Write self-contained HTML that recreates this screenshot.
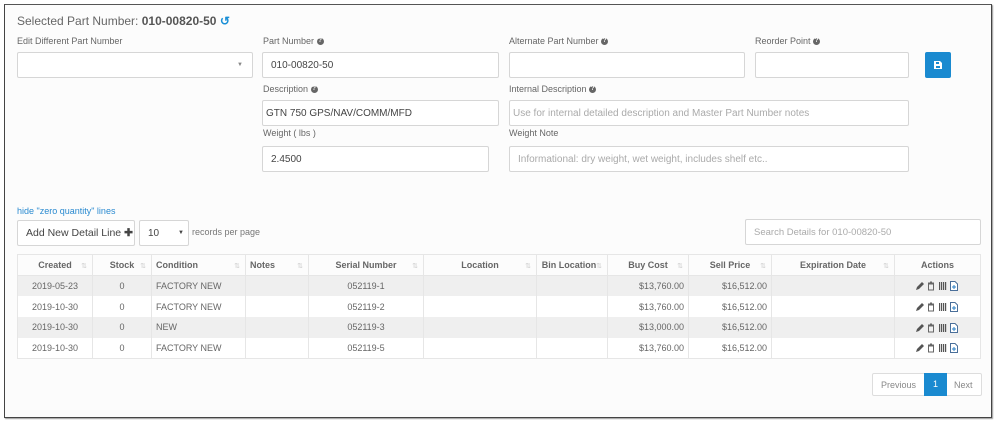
<!DOCTYPE html>
<html><head><meta charset="utf-8"><style>
*{box-sizing:border-box;margin:0;padding:0}
body{width:1000px;height:427px;background:#fff;font-family:"Liberation Sans",sans-serif;color:#555;position:relative;overflow:hidden}
.frame{position:absolute;left:4px;top:4px;width:988px;height:414px;border:1px solid #444;border-top-color:#555;background:#fcfcfc;box-shadow:1px 1px 1px #999}
.a{position:absolute}
.lbl{font-size:9px;color:#666}
.inp{position:absolute;border:1px solid #d6d6d6;background:#fff;border-radius:2px;font-size:10px;color:#444;padding-left:8px;display:flex;align-items:center}
.ph{color:#aaa}
.q{display:inline-block;width:7px;height:7px;border-radius:50%;background:#666;color:#fff;font-size:6px;text-align:center;line-height:7px;font-weight:bold;vertical-align:middle}
table{position:absolute;left:17px;top:254px;width:964px;border-collapse:collapse;font-size:9px;color:#666}
th{height:21px;font-weight:bold;border:1px solid #e6e6e6;color:#666;position:relative;background:#fcfcfc}
th span.s{position:absolute;right:5px;top:7px;color:#ccc;font-size:7px;font-weight:normal}
td{height:20.7px;border-left:1px solid #e6e6e6;border-right:1px solid #e6e6e6;padding:0 4px}
tr.g td{background:#efefef}
tr.w td{background:#fff}
tbody tr:last-child td{border-bottom:1px solid #e6e6e6}
.c{text-align:center}.r{text-align:right}
svg.ic{vertical-align:middle}
</style></head><body>
<div class="frame"></div>
<div class="a" style="left:17px;top:14px;font-size:12px;color:#666">Selected Part Number: <b style="color:#555">010-00820-50</b> <span style="color:#1a8fd6;font-weight:bold">↺</span></div>
<div class="a lbl" style="left:17px;top:36px">Edit Different Part Number</div>
<div class="inp" style="left:17px;top:52px;width:236px;height:26px"><span style="position:absolute;right:9px;font-size:6px;color:#888">▼</span></div>
<div class="a lbl" style="left:263px;top:36px">Part Number <span class="q">?</span></div>
<div class="inp" style="left:262px;top:52px;width:237px;height:26px">010-00820-50</div>
<div class="a lbl" style="left:509px;top:36px">Alternate Part Number <span class="q">?</span></div>
<div class="inp" style="left:509px;top:52px;width:236px;height:26px"></div>
<div class="a lbl" style="left:755px;top:36px">Reorder Point <span class="q">?</span></div>
<div class="inp" style="left:755px;top:52px;width:154px;height:26px"></div>
<div class="a" style="left:925px;top:52px;width:26px;height:26px;background:#1a8ad0;border-radius:2px"><svg class="a" style="left:9px;top:9px" width="8" height="8" viewBox="0 0 8 8"><path d="M0 0H6L8 2V8H0Z" fill="#fff"/><rect x="2" y="1" width="3" height="2" fill="#1a8ad0"/><rect x="2" y="5" width="4" height="2" fill="#1a8ad0"/></svg></div>
<div class="a lbl" style="left:263px;top:84px">Description <span class="q">?</span></div>
<div class="inp" style="left:262px;top:100px;width:237px;height:26px;padding-left:3px">GTN 750 GPS/NAV/COMM/MFD</div>
<div class="a lbl" style="left:509px;top:84px">Internal Description <span class="q">?</span></div>
<div class="inp ph" style="left:509px;top:100px;width:400px;height:26px;padding-left:3px">Use for internal detailed description and Master Part Number notes</div>
<div class="a lbl" style="left:263px;top:128px">Weight ( lbs )</div>
<div class="inp" style="left:262px;top:146px;width:227px;height:26px">2.4500</div>
<div class="a lbl" style="left:509px;top:128px">Weight Note</div>
<div class="inp ph" style="left:509px;top:146px;width:400px;height:26px">Informational: dry weight, wet weight, includes shelf etc..</div>
<div class="a" style="left:17px;top:206px;font-size:9px;color:#2a8ad0">hide "zero quantity" lines</div>
<div class="inp" style="left:17px;top:220px;width:118px;height:26px;font-size:10.5px;color:#444">Add New Detail Line <b style="margin-left:3px">✚</b></div>
<div class="inp" style="left:139px;top:220px;width:50px;height:26px;font-size:10px">10<span style="position:absolute;right:4px;font-size:6px">▼</span></div>
<div class="a" style="left:192px;top:227px;font-size:9px;color:#777">records per page</div>
<div class="inp ph" style="left:745px;top:219px;width:236px;height:26px;font-size:9.5px">Search Details for 010-00820-50</div>
<table>
<thead><tr>
<th style="width:75px">Created<span class="s">⇅</span></th>
<th style="width:59px">Stock<span class="s">⇅</span></th>
<th style="width:94px;text-align:left;padding-left:4px">Condition<span class="s">⇅</span></th>
<th style="width:63px;text-align:left;padding-left:4px">Notes<span class="s">⇅</span></th>
<th style="width:115px">Serial Number<span class="s">⇅</span></th>
<th style="width:113px">Location<span class="s">⇅</span></th>
<th style="width:71px;padding-right:6px">Bin Location<span class="s">⇅</span></th>
<th style="width:81px">Buy Cost<span class="s">⇅</span></th>
<th style="width:83px">Sell Price<span class="s">⇅</span></th>
<th style="width:123px">Expiration Date<span class="s">⇅</span></th>
<th>Actions</th>
</tr></thead>
<tbody>
<tr class="g"><td class="c">2019-05-23</td><td class="c">0</td><td>FACTORY NEW</td><td></td><td class="c">052119-1</td><td></td><td></td><td class="r">$13,760.00</td><td class="r">$16,512.00</td><td></td><td class="c">ICONS</td></tr>
<tr class="w"><td class="c">2019-10-30</td><td class="c">0</td><td>FACTORY NEW</td><td></td><td class="c">052119-2</td><td></td><td></td><td class="r">$13,760.00</td><td class="r">$16,512.00</td><td></td><td class="c">ICONS</td></tr>
<tr class="g"><td class="c">2019-10-30</td><td class="c">0</td><td>NEW</td><td></td><td class="c">052119-3</td><td></td><td></td><td class="r">$13,000.00</td><td class="r">$16,512.00</td><td></td><td class="c">ICONS</td></tr>
<tr class="w"><td class="c">2019-10-30</td><td class="c">0</td><td>FACTORY NEW</td><td></td><td class="c">052119-5</td><td></td><td></td><td class="r">$13,760.00</td><td class="r">$16,512.00</td><td></td><td class="c">ICONS</td></tr>
</tbody></table>
<script>
var ic='<svg class="ic" width="46" height="10" viewBox="0 0 46 10"><path d="M1 9L2 6L7 1L9 3L4 8Z" fill="#555"/><rect x="13" y="1.5" width="6" height="1" fill="#666"/><rect x="15" y="0.5" width="2" height="1" fill="#666"/><path d="M13.5 3H18.5V9H13.5Z" fill="none" stroke="#666" stroke-width="1"/><rect x="24" y="1" width="1.2" height="8" fill="#555"/><rect x="26" y="1" width="1.2" height="8" fill="#555"/><rect x="28" y="1" width="1.2" height="8" fill="#555"/><rect x="30" y="1" width="1.2" height="8" fill="#555"/><path d="M35.5 0.5H40L42.5 3V9.5H35.5Z" fill="#fff" stroke="#4a6f9a"/><path d="M39 4V8M37 6H41" stroke="#2a7fc6"/></svg>';
document.querySelectorAll('td').forEach(function(t){if(t.textContent=='ICONS')t.innerHTML=ic;});
</script>
<div class="a" style="left:872px;top:373px;width:110px;height:23px;border:1px solid #ddd;border-radius:2px;background:#fff;font-size:9px;color:#888">
<span class="a" style="left:8px;top:6px">Previous</span>
<span class="a" style="left:51px;top:-1px;width:23px;height:23px;background:#1a8ad0;color:#fff;text-align:center;line-height:23px">1</span>
<span class="a" style="left:81px;top:6px">Next</span></div>
</body></html>
